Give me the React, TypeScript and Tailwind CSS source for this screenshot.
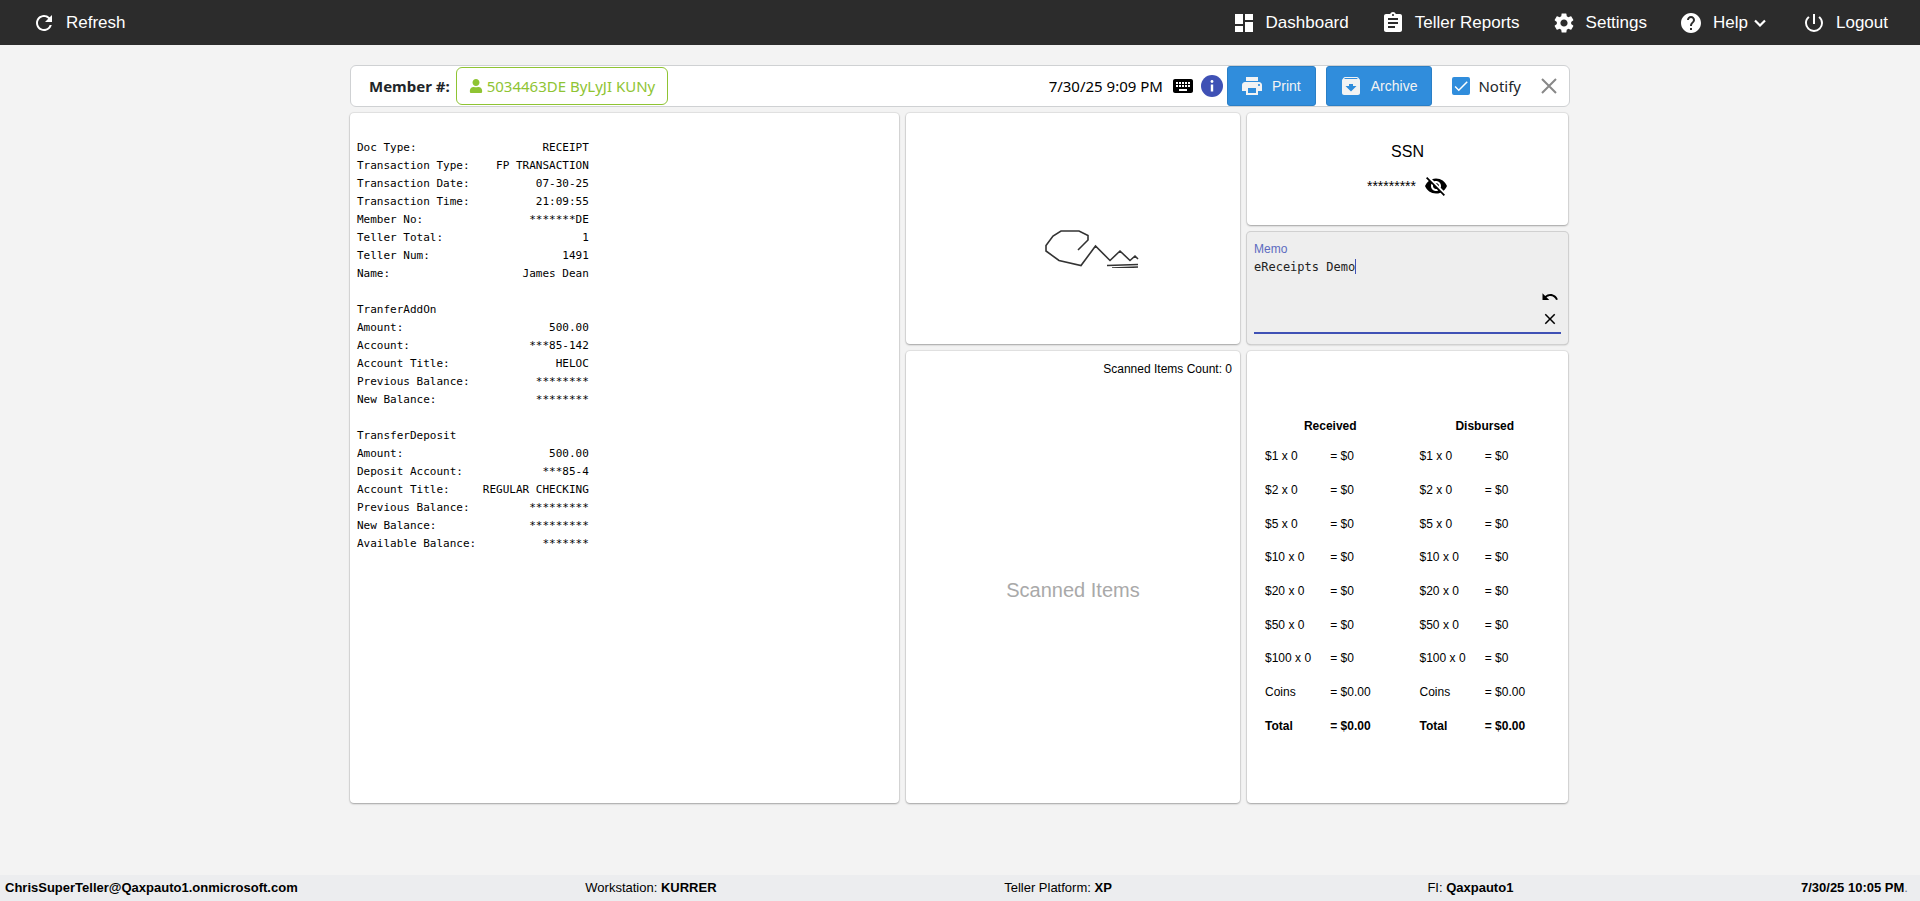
import { useState } from "react";
import type { ReactNode } from "react";
import type { IconType } from "react-icons";
import { FaUser } from "react-icons/fa";
import {
  MdArchive,
  MdAssignment,
  MdCheck,
  MdClose,
  MdDashboard,
  MdHelp,
  MdKeyboard,
  MdPowerSettingsNew,
  MdPrint,
  MdRefresh,
  MdSettings,
  MdUndo,
  MdVisibilityOff,
} from "react-icons/md";

const RECEIPT_WIDTH = 35;

type Line = [string, string?];

const receipt: Line[][] = [
  [
    ["Doc Type:", "RECEIPT"],
    ["Transaction Type:", "FP TRANSACTION"],
    ["Transaction Date:", "07-30-25"],
    ["Transaction Time:", "21:09:55"],
    ["Member No:", "*******DE"],
    ["Teller Total:", "1"],
    ["Teller Num:", "1491"],
    ["Name:", "James Dean"],
  ],
  [
    ["TranferAddOn"],
    ["Amount:", "500.00"],
    ["Account:", "***85-142"],
    ["Account Title:", "HELOC"],
    ["Previous Balance:", "********"],
    ["New Balance:", "********"],
  ],
  [
    ["TransferDeposit"],
    ["Amount:", "500.00"],
    ["Deposit Account:", "***85-4"],
    ["Account Title:", "REGULAR CHECKING"],
    ["Previous Balance:", "*********"],
    ["New Balance:", "*********"],
    ["Available Balance:", "*******"],
  ],
];

const denominations = [1, 2, 5, 10, 20, 50, 100];

function formatLine([label, value = ""]: Line) {
  return label + (value && value.padStart(RECEIPT_WIDTH - label.length));
}

const receiptText = receipt.map((block) => block.map(formatLine).join("\n")).join("\n\n");

function NavLink({ icon: Icon, label, children }: { icon: IconType; label: string; children?: ReactNode }) {
  return (
    <a href="#" className="flex items-center">
      <Icon className="mr-2.5 size-6" />
      {label}
      {children}
    </a>
  );
}

function NavBar() {
  return (
    <header className="flex h-[45px] shrink-0 items-center justify-between bg-[#2c2c2c] px-8 text-[17px] text-white">
      <NavLink icon={MdRefresh} label="Refresh" />
      <nav className="flex items-center gap-8">
        <NavLink icon={MdDashboard} label="Dashboard" />
        <NavLink icon={MdAssignment} label="Teller Reports" />
        <NavLink icon={MdSettings} label="Settings" />
        <NavLink icon={MdHelp} label="Help">
          <svg viewBox="0 0 12 8" className="mr-1 ml-1.5 h-2 w-3" fill="none" stroke="currentColor" strokeWidth="2.2">
            <path d="M1 1.500l5 5 5-5" />
          </svg>
        </NavLink>
        <NavLink icon={MdPowerSettingsNew} label="Logout" />
      </nav>
    </header>
  );
}

function Card({ className = "", children }: { className?: string; children?: ReactNode }) {
  return (
    <section
      className={`rounded-sm shadow-[0_1px_2px_rgba(0,0,0,0.28),0_0_1px_1px_rgba(0,0,0,0.07)] ${className}`}
    >
      {children}
    </section>
  );
}

function ActionButton({ icon: Icon, label }: { icon: IconType; label: string }) {
  return (
    <button
      type="button"
      className="flex h-10 items-center gap-2 rounded-[3px] border border-[#2a7fc6] bg-[#308ddc] pr-3.5 pl-3 text-sm text-[#f3f3f3]"
    >
      <Icon className="size-6" />
      {label}
    </button>
  );
}

function MemberBar() {
  const [notify, setNotify] = useState(true);

  return (
    <div className="flex h-[42px] items-center justify-between rounded-md border border-[#cfd1d3] bg-white pr-2 pl-[18px] font-['Noto_Sans',sans-serif] text-[15px]">
      <div className="flex items-center gap-1.5">
        <span className="font-bold text-[#212529]">Member #:</span>
        <button
          type="button"
          className="flex h-[38px] items-center gap-1 rounded-md border border-[#8fc433] px-3 text-[#8fc433]"
        >
          <FaUser className="size-3.5" />
          5034463DE ByLyJI KUNy
        </button>
      </div>
      <div className="flex items-center">
        <span className="mr-2">7/30/25 9:09 PM</span>
        <MdKeyboard className="mr-1.5 size-6" />
        <button
          type="button"
          aria-label="Information"
          className="mr-1 flex size-[22px] items-center justify-center rounded-full bg-[#3f51b5] text-white"
        >
          <svg viewBox="0 0 22 22" className="size-[22px]" fill="currentColor">
            <circle cx="11" cy="6.500" r="1.400" />
            <path d="M9.800 9.500h2.400v7H9.800z" />
          </svg>
        </button>
        <div className="flex gap-2.5 font-['Liberation_Sans',Arial,sans-serif]">
          <ActionButton icon={MdPrint} label="Print" />
          <ActionButton icon={MdArchive} label="Archive" />
        </div>
        <label className="ml-5 flex items-center gap-2 text-[#212529]">
          <span className="relative flex size-[18px]">
            <input
              type="checkbox"
              checked={notify}
              onChange={(e) => setNotify(e.target.checked)}
              className="peer size-[18px] appearance-none rounded-xs border-2 border-[#308ddc] checked:bg-[#308ddc]"
            />
            <MdCheck className="pointer-events-none absolute inset-0 hidden size-[18px] text-white peer-checked:block" />
          </span>
          Notify
        </label>
        <button type="button" aria-label="Close" className="ml-4 text-[#888]">
          <svg viewBox="0 0 24 24" className="size-6" fill="none" stroke="currentColor" strokeWidth="2">
            <path d="M5 5l14 14M19 5L5 19" />
          </svg>
        </button>
      </div>
    </div>
  );
}

function Signature() {
  return (
    <svg viewBox="0 0 100 46" className="h-[46px] w-[100px]" fill="none" stroke="#333" strokeWidth="1.6">
      <path d="M35 28L45 18V13.500L36 9H18L10 14L3 23.500V29L16 38.500L38 43.500L52.500 24L67 38.500L77 29L87 38.500L92 34L95 37" />
      <path d="M64 43.500L95 42.500M69 46L95 45" />
    </svg>
  );
}

function Memo() {
  const [memo, setMemo] = useState("eReceipts Demo");

  return (
    <Card className="flex flex-col bg-[#eee] px-[7px] pt-[9px] pb-2.5 ring-1 ring-[#d0d0d0]">
      <label htmlFor="memo" className="text-xs text-[#5c6bc0]">
        Memo
      </label>
      <div className="relative flex flex-1 border-b-2 border-[#3f51b5] font-['DejaVu_Sans_Mono',monospace] text-xs">
        <textarea
          id="memo"
          value={memo}
          onChange={(e) => setMemo(e.target.value)}
          className="w-full flex-1 resize-none pt-0.5 leading-4 text-[#222] caret-transparent outline-none"
        />
        <span className="absolute top-0.5 left-[14ch] h-[15px] w-px bg-[#3f51b5]" />
        <div className="flex flex-col justify-end gap-1 pr-0.5 pb-1">
          <button type="button" aria-label="Undo">
            <MdUndo className="size-[18px]" />
          </button>
          <button type="button" aria-label="Clear">
            <MdClose className="size-[18px]" />
          </button>
        </div>
      </div>
    </Card>
  );
}

function CashTable({ title }: { title: string }) {
  return (
    <table className="h-[331px] w-full table-fixed text-xs">
      <thead>
        <tr className="h-7">
          <th colSpan={2}>{title}</th>
        </tr>
      </thead>
      <tbody>
        {denominations.map((value) => (
          <tr key={value}>
            <td className="pl-3">${value} x 0</td>
            <td>= $0</td>
          </tr>
        ))}
        <tr>
          <td className="pl-3">Coins</td>
          <td>= $0.00</td>
        </tr>
        <tr className="font-bold">
          <td className="pl-3">Total</td>
          <td>= $0.00</td>
        </tr>
      </tbody>
    </table>
  );
}

function Footer() {
  return (
    <footer className="flex h-[26px] shrink-0 items-center justify-between bg-[#ecedef] pr-3 pl-[5px] text-[13px]">
      <b>ChrisSuperTeller@Qaxpauto1.onmicrosoft.com</b>
      <span>
        Workstation: <b>KURRER</b>
      </span>
      <span className="pr-7">
        Teller Platform: <b>XP</b>
      </span>
      <span>
        FI: <b>Qaxpauto1</b>
      </span>
      <span>
        <b>7/30/25 10:05 PM</b>
        <span className="text-gray-500">.</span>
      </span>
    </footer>
  );
}

export default function App() {
  return (
    <div className="flex min-h-screen flex-col bg-[#f3f3f3] font-['Liberation_Sans',Arial,sans-serif] text-black">
      <NavBar />
      <main className="mx-auto flex w-full max-w-[1220px] flex-1 flex-col gap-1.5 pt-5 pb-[72px]">
        <MemberBar />
        <div className="mr-0.5 grid flex-1 grid-cols-[549fr_334fr_321fr] gap-[7px]">
          <Card className="bg-white p-[7px] pt-[26px]">
            <pre className="font-['DejaVu_Sans_Mono',monospace] text-[11px] leading-[18px]">{receiptText}</pre>
          </Card>
          <div className="grid grid-rows-[231fr_452fr] gap-[7px]">
            <Card className="flex items-center justify-center bg-white pt-8 pl-10">
              <Signature />
            </Card>
            <Card className="flex flex-col bg-white p-2">
              <p className="pt-0.5 text-right text-xs">Scanned Items Count: 0</p>
              <p className="flex flex-1 items-center justify-center pt-2 text-xl text-[#a9a9a9]">Scanned Items</p>
            </Card>
          </div>
          <div className="grid grid-rows-[231fr_452fr] gap-[7px]">
            <div className="grid grid-rows-2 gap-[7px]">
              <Card className="flex flex-col items-center justify-center gap-2.5 bg-white">
                <h2>SSN</h2>
                <div className="flex items-center gap-2 text-sm">
                  *********
                  <button type="button" aria-label="Show SSN">
                    <MdVisibilityOff className="size-6" />
                  </button>
                </div>
              </Card>
              <Memo />
            </div>
            <Card className="flex items-center bg-white px-1.5">
              <CashTable title="Received" />
              <CashTable title="Disbursed" />
            </Card>
          </div>
        </div>
      </main>
      <Footer />
    </div>
  );
}
